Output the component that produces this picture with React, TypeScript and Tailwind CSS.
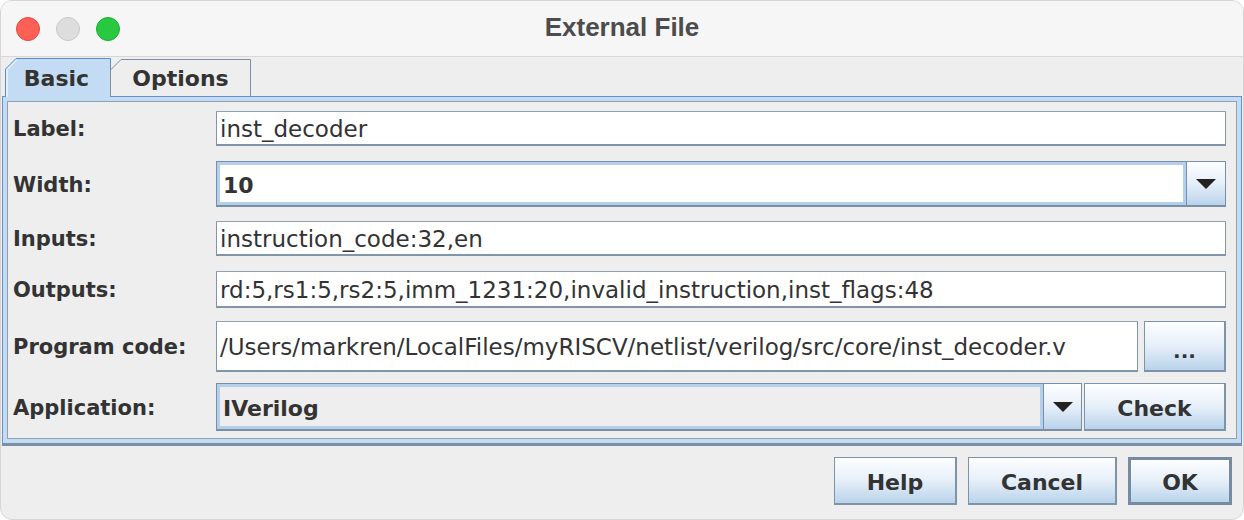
import React from "react";

const ui = "font-['DejaVu_Sans',sans-serif]";
const btnFace =
  "bg-gradient-to-b from-[#fdfeff] via-[#e6eff9] to-[#b9d3eb] text-[#333333] font-bold";

const Arrow = () => (
  <div className="w-0 h-0 border-l-[10px] border-r-[10px] border-t-[10px] border-l-transparent border-r-transparent border-t-[#222222]" />
);

const TextField = ({ value }: { value: string }) => (
  <div className="flex-1 h-full flex items-center bg-white border border-[#8195aa] border-b-2 border-t-[#8fa2b6] pl-[3px] pt-[3px] text-[23px] text-[#333333] whitespace-nowrap overflow-hidden">
    {value}
  </div>
);

const Row = ({
  label,
  h,
  mt,
  children,
}: {
  label: string;
  h: string;
  mt: string;
  children: React.ReactNode;
}) => (
  <div className={`flex items-center ${h} ${mt}`}>
    <div className="w-[203px] shrink-0 pt-[3px] text-[21px] font-bold text-[#333333]">{label}</div>
    <div className="flex-1 h-full flex">{children}</div>
  </div>
);

const ExternalFileDialog = () => {
  return (
    <div className={`w-[1244px] h-[520px] bg-white ${ui}`}>
      <div className="w-full h-full bg-[#eeeeee] rounded-[12px] overflow-hidden flex flex-col border border-[#d6d6d6]">
        {/* title bar */}
        <div className="h-[56px] shrink-0 bg-[#f6f6f7] border-b border-[#d7d7d7] grid grid-cols-[1fr_auto_1fr] items-center">
          <div className="flex items-center gap-[16px] pl-[15px]">
            <div className="w-[24px] h-[24px] rounded-full bg-[#fe5f57] border border-[#e24a42]" />
            <div className="w-[24px] h-[24px] rounded-full bg-[#dddddd] border border-[#c8c8c8]" />
            <div className="w-[24px] h-[24px] rounded-full bg-[#28c840] border border-[#1dac2c]" />
          </div>
          <div className="font-['Liberation_Sans',sans-serif] text-[26px] font-bold text-[#4c4c4c] -mt-[2px]">
            External File
          </div>
          <div />
        </div>

        {/* tabs */}
        <div className="relative z-10 flex items-end h-[38px] mt-[2px] pl-[4px]">
          <div className="relative w-[106px] h-[39px] flex items-center justify-center">
            <svg className="absolute inset-0" width="106" height="39" viewBox="0 0 106 39">
              <path d="M0.5,39 L0.5,11 L11,0.5 L105.5,0.5 L105.5,39" fill="#c4dcf3" stroke="#5d8ac8" />
              <path d="M2,39 L2,11.6 L11.6,2" fill="none" stroke="#ffffff" />
            </svg>
            <span className="relative text-[22px] font-bold text-[#333333] pt-[2px] -ml-[3px]">Basic</span>
          </div>
          <div className="relative -ml-px w-[141px] h-[37px] mb-[1px] flex items-center justify-center">
            <svg className="absolute inset-0" width="141" height="37" viewBox="0 0 141 37">
              <path d="M0.5,37 L0.5,11 L11,0.5 L140.5,0.5 L140.5,37" fill="#eeeeee" stroke="#7d91a6" />
            </svg>
            <span className="relative text-[22px] font-bold text-[#333333] pt-[2px]">Options</span>
          </div>
        </div>

        {/* tab panel */}
        <div className="-mt-px mx-[1px] border border-[#6b90c5] border-b-[3px] border-b-[#7b90a6] bg-[#c4dcf3] px-[4px] pt-[4px] pb-[4px]">
          <div className="border border-[#8da0b4] bg-[#eeeeee] pl-[5px] pr-[10px] pt-[9px] pb-[7px] flex flex-col">
            <Row label="Label:" h="h-[35px]" mt="">
              <TextField value="inst_decoder" />
            </Row>
            <Row label="Width:" h="h-[46px]" mt="mt-[15px]">
              <div className="flex-1 flex border border-[#7a8fa5] border-b-2">
                <div className="flex-1 flex items-center bg-white border-[3px] border-[#b3cfe9] pl-[3px] pt-[3px] text-[22px] font-bold text-[#333333]">
                  10
                </div>
                <div className={`w-[39px] flex items-center justify-center border-l border-[#7a8fa5] ${btnFace}`}>
                  <Arrow />
                </div>
              </div>
            </Row>
            <Row label="Inputs:" h="h-[35px]" mt="mt-[14px]">
              <TextField value="instruction_code:32,en" />
            </Row>
            <Row label="Outputs:" h="h-[37px]" mt="mt-[15px]">
              <TextField value="rd:5,rs1:5,rs2:5,imm_1231:20,invalid_instruction,inst_flags:48" />
            </Row>
            <Row label="Program code:" h="h-[51px]" mt="mt-[13px]">
              <TextField value="/Users/markren/LocalFiles/myRISCV/netlist/verilog/src/core/inst_decoder.v" />
              <div
                className={`w-[82px] ml-[6px] flex items-center justify-center border border-[#7f93a8] border-b-2 border-r-2 pt-[10px] text-[20px] ${btnFace}`}
              >
                ...
              </div>
            </Row>
            <Row label="Application:" h="h-[48px]" mt="mt-[11px]">
              <div className="flex-1 flex border border-[#7a8fa5] border-b-2">
                <div className="flex-1 flex items-center bg-[#eeeeee] border-[3px] border-[#b3cfe9] pl-[3px] pt-[3px] text-[22px] font-bold text-[#333333]">
                  IVerilog
                </div>
                <div className={`w-[38px] flex items-center justify-center border-l border-[#7a8fa5] ${btnFace}`}>
                  <Arrow />
                </div>
              </div>
              <div
                className={`w-[142px] ml-[2px] flex items-center justify-center border border-[#7f93a8] border-b-2 border-r-2 pt-[3px] text-[22px] ${btnFace}`}
              >
                Check
              </div>
            </Row>
          </div>
        </div>

        {/* buttons */}
        <div className="flex justify-end gap-[11px] pr-[11px] pt-[11px]">
          <div
            className={`w-[123px] h-[48px] flex items-center justify-center border border-[#7f93a8] border-b-2 border-r-2 pt-[3px] text-[22px] ${btnFace}`}
          >
            Help
          </div>
          <div
            className={`w-[149px] h-[48px] flex items-center justify-center border border-[#7f93a8] border-b-2 border-r-2 pt-[3px] text-[22px] ${btnFace}`}
          >
            Cancel
          </div>
          <div
            className={`w-[104px] h-[48px] flex items-center justify-center border-[3px] border-[#768ba2] pt-[3px] text-[22px] ${btnFace}`}
          >
            OK
          </div>
        </div>
      </div>
    </div>
  );
};

export default function App() {
  return <ExternalFileDialog />;
}
